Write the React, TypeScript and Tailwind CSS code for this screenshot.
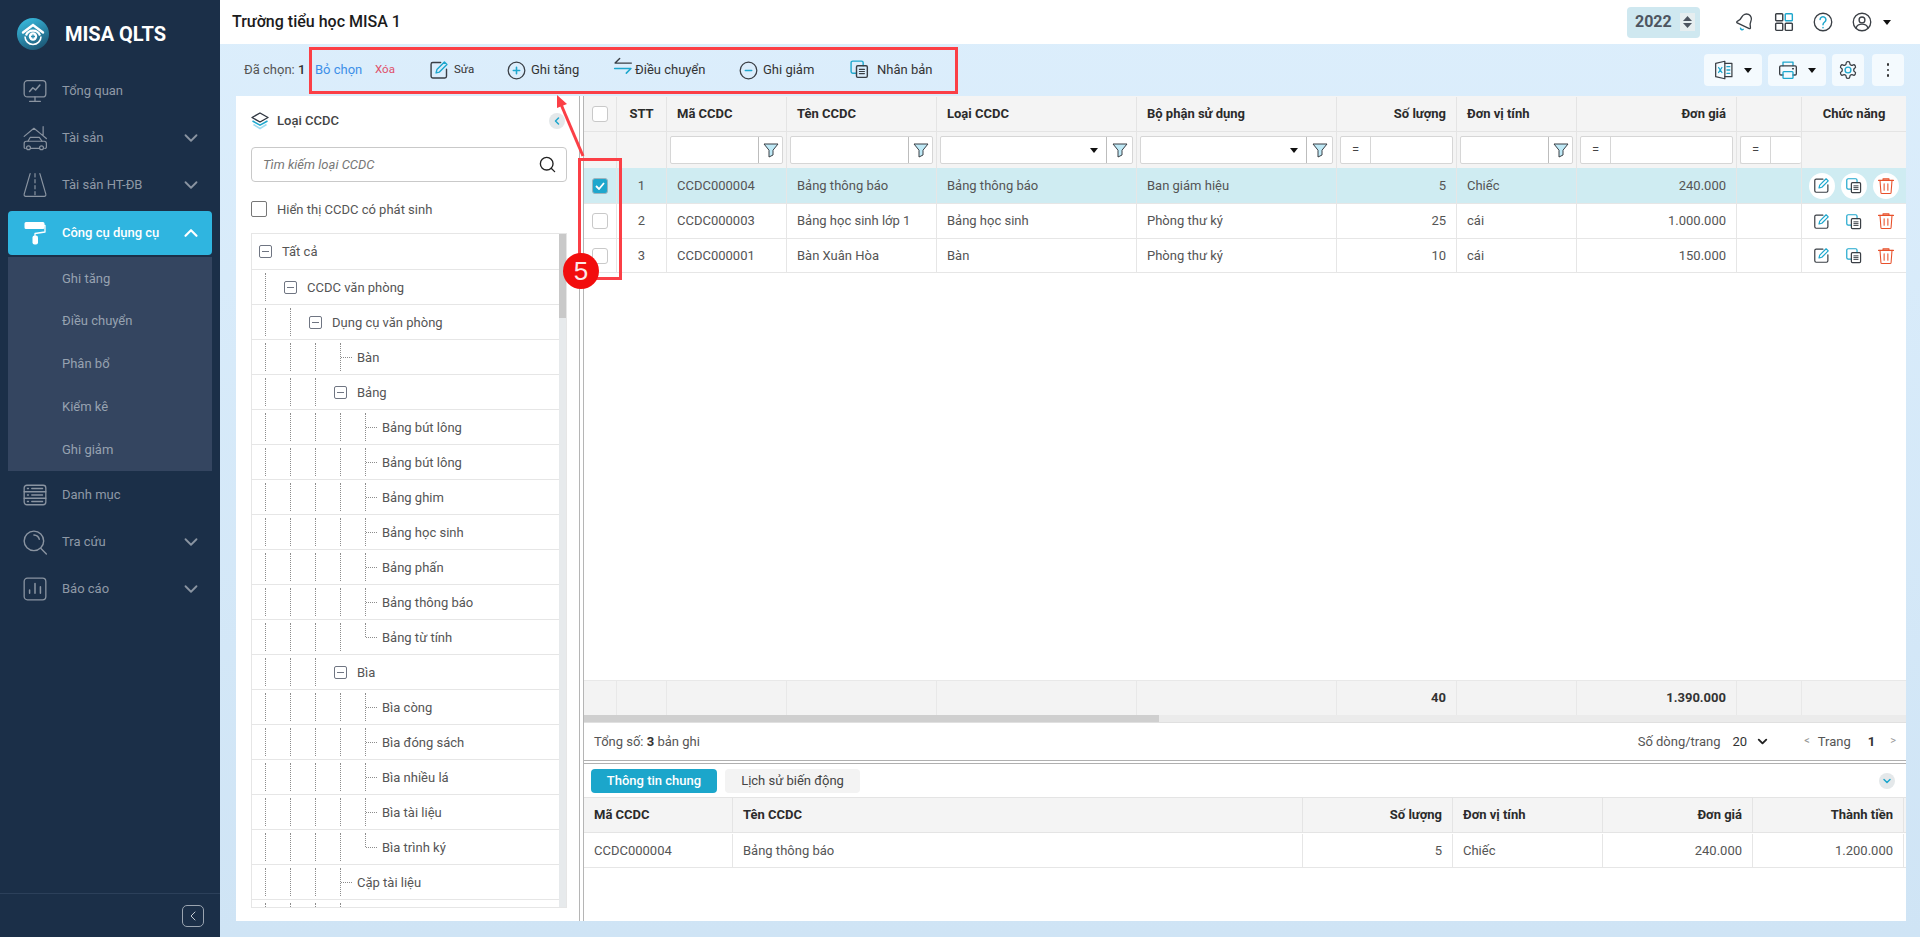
// Màn hình Công cụ dụng cụ — MISA QLTS
import { ChevronDown, ChevronLeft, ChevronUp, Search } from "lucide-react";
import type { ReactNode } from "react";

const COLS =
  "grid grid-cols-[33px_50px_120px_150px_200px_200px_120px_120px_160px_65px_104px]";
const DETAIL_COLS = "grid grid-cols-[149px_570px_150px_150px_150px_153px]";

function Svg({ size = 24, children, className }: { size?: number; children: ReactNode; className?: string }) {
  return (
    <svg
      width={size}
      height={size}
      viewBox="0 0 24 24"
      fill="none"
      strokeLinecap="round"
      strokeLinejoin="round"
      className={className}
    >
      {children}
    </svg>
  );
}

/* ---------- icon menu ---------- */
const MENU_STROKE = "#8a94a1";

function IconOverview() {
  return (
    <Svg size={26}>
      <g stroke={MENU_STROKE} strokeWidth="1.2">
        <rect x="2" y="2.5" width="20" height="15" rx="3" />
        <path d="M12 17.5v4M7 21.5h10" />
        <path d="M7 12.5l3-3.5 2.5 2L16.5 6.5" strokeWidth="1.4" />
      </g>
    </Svg>
  );
}
function IconAsset() {
  return (
    <Svg size={26}>
      <g stroke={MENU_STROKE} strokeWidth="1.1">
        <path d="M2 10.5L11 3l5.5 4.5M19.5 1.5v8.5M16.5 7.5l6 5" />
        <path d="M5.5 15l2-3.5h8.5l2.5 3.5" />
        <path d="M3 21.5h-.5a1 1 0 0 1-.5-1v-3.5a2 2 0 0 1 2-2h16.5a2 2 0 0 1 2 2v3.5a1 1 0 0 1-.7 1H21" />
        <circle cx="6" cy="21" r="1.8" />
        <circle cx="18" cy="21" r="1.8" />
        <path d="M8 21.5h8" />
      </g>
    </Svg>
  );
}
function IconRoad() {
  return (
    <Svg size={26}>
      <g stroke={MENU_STROKE} strokeWidth="1.1">
        <path d="M7.5 1.5L2 20.5a1.5 1.5 0 0 0 1.5 2h17a1.5 1.5 0 0 0 1.5-2L16.5 1.5" />
        <path d="M12 1.5v3M12 7v3M12 12.5v3M12 18v3" />
      </g>
    </Svg>
  );
}
function IconRoller() {
  return (
    <Svg>
      <path
        d="M3 1h17a1.5 1.5 0 0 1 1.5 1.5v4A1.5 1.5 0 0 1 20 8H3a1.5 1.5 0 0 1-1.5-1.5v-4A1.5 1.5 0 0 1 3 1z"
        fill="#fff"
      />
      <path d="M21 4.5h1v6.5l-10 1.5v2" stroke="#fff" strokeWidth="1.3" />
      <rect x="9.5" y="14.5" width="5.5" height="9" rx="2" fill="#fff" />
    </Svg>
  );
}
function IconCatalog() {
  return (
    <Svg size={26}>
      <g stroke={MENU_STROKE} strokeWidth="1.2">
        <rect x="2" y="3" width="20" height="18" rx="2.5" />
        <path d="M2 9h20M2 15h20" />
        <path d="M5 6h1M9 6h10M5 12h1M9 12h10M5 18h1M9 18h10" />
      </g>
    </Svg>
  );
}
function IconLookup() {
  return (
    <Svg size={26}>
      <g stroke={MENU_STROKE} strokeWidth="1.3">
        <circle cx="11" cy="11" r="9" />
        <path d="M11 5.5a5.5 5.5 0 0 1 5 4" />
        <path d="M17.5 18l5 5" />
      </g>
    </Svg>
  );
}
function IconReport() {
  return (
    <Svg size={26}>
      <g stroke={MENU_STROKE} strokeWidth="1.2">
        <rect x="2" y="2" width="20" height="20" rx="3" />
        <path d="M7 16v-3M12 16V7M17 16v-6" strokeWidth="1.4" />
      </g>
    </Svg>
  );
}
function Logo() {
  return (
    <svg width="32" height="32" viewBox="0 0 32 32">
      <defs>
        <linearGradient id="logo" x1="0.2" y1="0" x2="0.7" y2="1">
          <stop offset="0" stopColor="#38bce0" />
          <stop offset="1" stopColor="#1c5674" />
        </linearGradient>
      </defs>
      <circle cx="16" cy="16" r="16" fill="url(#logo)" />
      <path d="M6 14.5L16 7l10 7.5" stroke="#fff" strokeWidth="2.4" fill="none" strokeLinecap="round" />
      <path d="M9 17.5a7.5 7.5 0 0 1 14 0" stroke="#fff" strokeWidth="2.2" fill="none" />
      <path d="M8 18.5a8 8 0 0 0 16 0" stroke="#fff" strokeWidth="1.6" fill="none" />
      <circle cx="16" cy="18.5" r="4.2" fill="#fff" />
      <path d="M14 18.5h4M16 16.5v4" stroke="#2a8db0" strokeWidth="1.3" />
    </svg>
  );
}

/* ---------- icon thanh công cụ ---------- */
const DARK = "#3a3f45";
const BLUE = "#1ea7cd";

function EditIcon({ size = 20 }: { size?: number }) {
  return (
    <Svg size={size}>
      <path d="M14 3H4.5A2 2 0 0 0 2.5 5v14.5a2 2 0 0 0 2 2H19a2 2 0 0 0 2-2V11" stroke={DARK} strokeWidth="1.7" />
      <path d="M8.5 15.5l1-4L18.5 2.5l3 3-9 9z" stroke={BLUE} strokeWidth="1.7" />
    </Svg>
  );
}
function CopyIcon({ size = 20, className }: { size?: number; className?: string }) {
  return (
    <Svg size={size} className={className}>
      <path d="M9 17H4.5a2 2 0 0 1-2-2V4.5a2 2 0 0 1 2-2H15a2 2 0 0 1 2 2V8" stroke={BLUE} strokeWidth="1.7" />
      <rect x="9" y="8" width="13" height="14" rx="1.5" stroke={DARK} strokeWidth="1.7" />
      <path d="M12.5 12.5h6M12.5 15h6M12.5 17.5h6" stroke={DARK} strokeWidth="1.4" />
    </Svg>
  );
}
function TrashIcon() {
  return (
    <Svg size={18}>
      <path d="M2 4.5h20M8 4.5V2.5h8v2" stroke="#e8502a" strokeWidth="1.4" />
      <path d="M4 4.5l1.2 16a1.5 1.5 0 0 0 1.5 1.5h10.6a1.5 1.5 0 0 0 1.5-1.5L20 4.5" stroke="#e8502a" strokeWidth="1.4" />
      <path d="M9.5 9v8.5M14.5 9v8.5" stroke="#e8502a" strokeWidth="1.4" />
    </Svg>
  );
}
function CircleSign({ minus }: { minus?: boolean }) {
  return (
    <Svg size={19}>
      <circle cx="12" cy="12" r="10.5" stroke={DARK} strokeWidth="1.6" />
      <path d={minus ? "M8 12h8" : "M8 12h8M12 8v8"} stroke={BLUE} strokeWidth="2" />
    </Svg>
  );
}
function TransferIcon() {
  return (
    <Svg size={20} className="-mt-[8px]">
      <path d="M22 8.5H2.5L8 3" stroke={DARK} strokeWidth="1.7" />
      <path d="M2 15h19.5L16 20.5" stroke={BLUE} strokeWidth="1.9" />
    </Svg>
  );
}
function FilterIcon() {
  return (
    <svg width="16" height="16" viewBox="0 0 16 16">
      <path
        d="M1 2h14L10 8.2V13l-4 2V8.2z"
        fill="#bfe9f6"
        stroke="#3a3f45"
        strokeWidth="1"
        strokeLinejoin="round"
      />
    </svg>
  );
}
function Caret({ className = "" }: { className?: string }) {
  return (
    <svg width="8" height="5" viewBox="0 0 8 5" className={className}>
      <path d="M0 0h8L4 5z" fill="#111" />
    </svg>
  );
}

/* ---------- sidebar ---------- */
function MenuItem({ icon, label, arrow }: { icon: ReactNode; label: string; arrow?: boolean }) {
  return (
    <div className="flex h-[47px] shrink-0 items-center pl-[22px] pr-[18px] text-[13px] text-[#8f99a6]">
      <span className="flex w-[40px] shrink-0">{icon}</span>
      <span className="flex-1">{label}</span>
      {arrow && <ChevronDown size={22} strokeWidth={2} color={MENU_STROKE} />}
    </div>
  );
}

function Sidebar() {
  return (
    <aside className="flex h-full w-[220px] shrink-0 flex-col bg-[#1b2f48]">
      <div className="flex h-[67px] shrink-0 items-center gap-[16px] pl-[17px]">
        <Logo />
        <span className="text-[20px] font-bold text-white">MISA QLTS</span>
      </div>
      <MenuItem icon={<IconOverview />} label="Tổng quan" />
      <MenuItem icon={<IconAsset />} label="Tài sản" arrow />
      <MenuItem icon={<IconRoad />} label="Tài sản HT-ĐB" arrow />
      <div className="mx-[8px] mt-[3px] flex h-[44px] shrink-0 items-center rounded-[4px] bg-[#2fb5e0] pl-[15px] pr-[10px] text-[13px] font-medium text-white">
        <span className="flex w-[39px] shrink-0">
          <IconRoller />
        </span>
        <span className="flex-1">Công cụ dụng cụ</span>
        <ChevronUp size={22} strokeWidth={2.4} color="#fff" />
      </div>
      <div className="mx-[8px] mt-[2px] flex h-[214px] shrink-0 flex-col bg-[#344560] pl-[54px] text-[13px] text-[#97a2b0]">
        {["Ghi tăng", "Điều chuyển", "Phân bổ", "Kiểm kê", "Ghi giảm"].map((t) => (
          <div key={t} className="flex h-[43px] items-center">
            {t}
          </div>
        ))}
      </div>
      <MenuItem icon={<IconCatalog />} label="Danh mục" />
      <MenuItem icon={<IconLookup />} label="Tra cứu" arrow />
      <MenuItem icon={<IconReport />} label="Báo cáo" arrow />
      <div className="mt-auto flex h-[44px] shrink-0 items-center justify-end border-t border-[#2c405a] pr-[16px]">
        <span className="flex h-[22px] w-[22px] items-center justify-center rounded-[5px] border border-[#9aa4b0]">
          <ChevronLeft size={16} strokeWidth={1.5} color="#c3cad2" />
        </span>
      </div>
    </aside>
  );
}

/* ---------- thanh trên ---------- */
function TopBar() {
  return (
    <header className="flex h-[44px] shrink-0 items-center bg-white pl-[12px]">
      <span className="text-[16px] font-medium text-[#1b1b1b]">Trường tiểu học MISA 1</span>
      <div className="ml-auto flex h-[31px] w-[73px] items-center rounded-[4px] bg-[#cfe8f0] pl-[8px] text-[16px] font-bold text-[#4d5560]">
        2022
        <span className="ml-[8px] flex h-[18px] w-[15px] flex-col items-center justify-center gap-[2px] bg-[#e6eef0]">
          <svg width="9" height="5" viewBox="0 0 9 5">
            <path d="M0 5h9L4.5 0z" fill="#4d5560" />
          </svg>
          <svg width="9" height="5" viewBox="0 0 9 5">
            <path d="M0 0h9L4.5 5z" fill="#4d5560" />
          </svg>
        </span>
      </div>
      <div className="ml-[35px] mr-[29px] flex items-center gap-[19px]">
        <Svg size={20}>
          <g transform="rotate(25 12 12)">
            <path
              d="M3.262 15.326A1 1 0 0 0 4 17h16a1 1 0 0 0 .74-1.673C19.41 13.956 18 12.499 18 8A6 6 0 0 0 6 8c0 4.499-1.411 5.956-2.738 7.326"
              stroke={DARK}
              strokeWidth="1.6"
            />
            <path d="M10.268 21a2 2 0 0 0 3.464 0" stroke={BLUE} strokeWidth="1.8" />
          </g>
        </Svg>
        <Svg size={20}>
          <g strokeWidth="1.7">
            <rect x="2" y="2" width="8.5" height="8.5" rx="1" stroke={DARK} />
            <rect x="13.5" y="2" width="8.5" height="8.5" rx="1" stroke={BLUE} />
            <rect x="2" y="13.5" width="8.5" height="8.5" rx="1" stroke={DARK} />
            <rect x="13.5" y="13.5" width="8.5" height="8.5" rx="1" stroke={DARK} />
          </g>
        </Svg>
        <Svg size={20}>
          <circle cx="12" cy="12" r="10.5" stroke={DARK} strokeWidth="1.6" />
          <path d="M8.5 9a3.5 3.5 0 1 1 5.5 3c-1.5 1-2 1.8-2 3.2M12 18.5v.3" stroke={BLUE} strokeWidth="1.8" />
        </Svg>
        <span className="flex items-center gap-[11px]">
          <Svg size={20}>
            <circle cx="12" cy="12" r="10.5" stroke={DARK} strokeWidth="1.6" />
            <circle cx="12" cy="9.5" r="3.5" stroke={DARK} strokeWidth="1.6" />
            <path d="M5 19c1-3 4-4.5 7-4.5s6 1.5 7 4.5" stroke={DARK} strokeWidth="1.6" />
          </Svg>
          <Caret />
        </span>
      </div>
    </header>
  );
}

function Action({ icon, label, className = "" }: { icon: ReactNode; label: string; className?: string }) {
  return (
    <span className={`flex items-center text-[#333] ${className}`}>
      {icon}
      {label}
    </span>
  );
}

function ToolButton({ children, className = "" }: { children: ReactNode; className?: string }) {
  return (
    <span className={`flex h-[32px] items-center justify-center rounded-[4px] bg-[#f4fafe] ${className}`}>
      {children}
    </span>
  );
}

function Toolbar() {
  return (
    <div className="flex h-[52px] shrink-0 items-center pl-[24px] pr-[16px] text-[13px]">
      <span className="w-[71px] text-[#555]">
        Đã chọn: <b className="font-medium text-[#333]">1</b>
      </span>
      <span className="w-[60px] text-[#3d8fe8]">Bỏ chọn</span>
      <span className="w-[54px] text-[11.5px] text-[#e0506a]">Xóa</span>
      <Action className="w-[78px] gap-[5px] text-[11.5px]" icon={<EditIcon />} label="Sửa" />
      <Action className="w-[106px] gap-[5px]" icon={<CircleSign />} label="Ghi tăng" />
      <Action className="w-[126px] gap-[2px]" icon={<TransferIcon />} label="Điều chuyển" />
      <Action className="w-[110px] gap-[5px]" icon={<CircleSign minus />} label="Ghi giảm" />
      <Action className="gap-[8px]" icon={<CopyIcon className="-mt-[3px]" />} label="Nhân bản" />
      <div className="ml-auto flex items-center gap-[6px]">
        <ToolButton className="w-[58px] gap-[10px]">
          <Svg size={20}>
            <path d="M13 1.5L2 4v16l11 2.5z" stroke={DARK} strokeWidth="1.5" />
            <path d="M13 4h8.5v16H13" stroke={DARK} strokeWidth="1.5" />
            <path d="M5.5 9l4 6M9.5 9l-4 6" stroke={BLUE} strokeWidth="1.6" />
            <path d="M15.5 8h3.5M15.5 12h3.5M15.5 16h3.5" stroke={BLUE} strokeWidth="1.6" />
          </Svg>
          <Caret />
        </ToolButton>
        <ToolButton className="w-[58px] gap-[10px]">
          <Svg size={20}>
            <path d="M6 7V2.5h12V7" stroke={BLUE} strokeWidth="1.6" />
            <path d="M6 18H3.5A1.5 1.5 0 0 1 2 16.5v-8A1.5 1.5 0 0 1 3.5 7h17A1.5 1.5 0 0 1 22 8.5v8a1.5 1.5 0 0 1-1.5 1.5H18" stroke={DARK} strokeWidth="1.6" />
            <rect x="6" y="14" width="12" height="8" rx="1" stroke={BLUE} strokeWidth="1.6" />
            <path d="M17.5 10.5h1" stroke={DARK} strokeWidth="1.6" />
          </Svg>
          <Caret />
        </ToolButton>
        <ToolButton className="w-[32px]">
          <Svg size={20}>
            <path
              d="M12.22 2h-.44a2 2 0 0 0-2 2v.18a2 2 0 0 1-1 1.73l-.43.25a2 2 0 0 1-2 0l-.15-.08a2 2 0 0 0-2.73.73l-.22.38a2 2 0 0 0 .73 2.73l.15.1a2 2 0 0 1 1 1.72v.51a2 2 0 0 1-1 1.74l-.15.09a2 2 0 0 0-.73 2.73l.22.38a2 2 0 0 0 2.73.73l.15-.08a2 2 0 0 1 2 0l.43.25a2 2 0 0 1 1 1.73V20a2 2 0 0 0 2 2h.44a2 2 0 0 0 2-2v-.18a2 2 0 0 1 1-1.73l.43-.25a2 2 0 0 1 2 0l.15.08a2 2 0 0 0 2.73-.73l.22-.39a2 2 0 0 0-.73-2.73l-.15-.08a2 2 0 0 1-1-1.74v-.5a2 2 0 0 1 1-1.74l.15-.09a2 2 0 0 0 .73-2.73l-.22-.38a2 2 0 0 0-2.73-.73l-.15.08a2 2 0 0 1-2 0l-.43-.25a2 2 0 0 1-1-1.73V4a2 2 0 0 0-2-2z"
              stroke={DARK}
              strokeWidth="1.5"
            />
            <circle cx="12" cy="12" r="3.5" stroke={BLUE} strokeWidth="1.6" />
          </Svg>
        </ToolButton>
        <ToolButton className="ml-[2px] w-[32px] flex-col gap-[3px]">
          <span className="h-[2.5px] w-[2.5px] rounded-full bg-[#333]" />
          <span className="h-[2.5px] w-[2.5px] rounded-full bg-[#333]" />
          <span className="h-[2.5px] w-[2.5px] rounded-full bg-[#333]" />
        </ToolButton>
      </div>
    </div>
  );
}

/* ---------- cây loại CCDC ---------- */
type TreeNode = { label: string; level: number; folder?: boolean; last?: boolean };

const TREE: TreeNode[] = [
  { label: "Tất cả", level: 0, folder: true },
  { label: "CCDC văn phòng", level: 1, folder: true },
  { label: "Dụng cụ văn phòng", level: 2, folder: true },
  { label: "Bàn", level: 3 },
  { label: "Bảng", level: 3, folder: true },
  { label: "Bảng bút lông", level: 4 },
  { label: "Bảng bút lông", level: 4 },
  { label: "Bảng ghim", level: 4 },
  { label: "Bảng học sinh", level: 4 },
  { label: "Bảng phấn", level: 4 },
  { label: "Bảng thông báo", level: 4 },
  { label: "Bảng từ tính", level: 4, last: true },
  { label: "Bìa", level: 3, folder: true },
  { label: "Bìa còng", level: 4 },
  { label: "Bìa đóng sách", level: 4 },
  { label: "Bìa nhiều lá", level: 4 },
  { label: "Bìa tài liệu", level: 4 },
  { label: "Bìa trình ký", level: 4, last: true },
  { label: "Cặp tài liệu", level: 3 },
  { label: "", level: 3 },
];

function TreeRow({ node, first }: { node: TreeNode; first: boolean }) {
  const guides = Array.from({ length: node.level });
  return (
    <div className={`flex shrink-0 items-stretch border-b border-[#e6e6e6] pl-[7px] text-[13px] text-[#555] ${first ? "h-[36px]" : "h-[35px]"}`}>
      {guides.map((_, i) => (
        <span key={i} className="w-[25px] shrink-0 py-[3px]">
          <span className="ml-[6px] block h-full border-l border-dotted border-[#8c8c8c]" />
        </span>
      ))}
      {node.folder ? (
        <span className="flex w-[23px] shrink-0 items-center">
          <span className="flex h-[13px] w-[13px] items-center justify-center rounded-[2px] border border-[#6f7582]">
            <span className="h-px w-[7px] bg-[#6f7582]" />
          </span>
        </span>
      ) : (
        <span className="flex w-[23px] shrink-0 py-[3px] pl-[6px]">
          <span className={`block border-l border-dotted border-[#8c8c8c] ${node.last ? "h-1/2" : "h-full"}`} />
          <span className="block w-[11px] self-center border-t border-dotted border-[#8c8c8c]" />
        </span>
      )}
      <span className="flex items-center pt-[1px]">{node.label}</span>
    </div>
  );
}

function TreePanel() {
  return (
    <section className="flex w-[343px] shrink-0 flex-col bg-white pl-[15px] pr-[12px]">
      <div className="flex h-[50px] shrink-0 items-center">
        <svg width="18" height="18" viewBox="0 0 18 18" className="mr-[8px]">
          <path d="M9 1l8 4.5L9 10 1 5.5z" fill="#fff" stroke="#2f3640" strokeWidth="1.4" strokeLinejoin="round" />
          <path d="M1.5 9L9 13.2 16.5 9" fill="none" stroke="#1ea7cd" strokeWidth="1.5" />
          <path d="M2.5 12.5L9 16.5l6.5-4" fill="none" stroke="#9edcf0" strokeWidth="1.5" />
        </svg>
        <span className="text-[13px] font-medium text-[#444]">Loại CCDC</span>
        <span className="ml-auto mr-[2px] flex h-[16px] w-[16px] items-center justify-center rounded-full bg-[#e4e8ea]">
          <ChevronLeft size={12} strokeWidth={3} color="#1ea7cd" />
        </span>
      </div>
      <div className="mt-[1px] flex h-[35px] shrink-0 items-center rounded-[4px] border border-[#c9c9c9] pl-[11px] pr-[9px]">
        <span className="flex-1 text-[13px] italic text-[#777]">Tìm kiếm loại CCDC</span>
        <Search size={19} color="#222" strokeWidth={1.7} />
      </div>
      <label className="mt-[19px] flex h-[16px] shrink-0 items-center gap-[10px] text-[13px] text-[#555]">
        <span className="h-[16px] w-[16px] shrink-0 rounded-[2px] border border-[#777] bg-white" />
        <span className="pt-[1px]">Hiển thị CCDC có phát sinh</span>
      </label>
      <div className="mt-[16px] flex min-h-0 flex-1 border border-b-0 border-[#e6e6e6]">
        <div className="min-w-0 flex-1 overflow-hidden">
          {TREE.map((n, i) => (
            <TreeRow key={i} node={n} first={i === 0} />
          ))}
        </div>
        <div className="w-[7px] shrink-0 bg-[#e7eaec]">
          <div className="h-[84px] bg-[#c9c9c9]" />
        </div>
      </div>
      <div className="h-[14px] shrink-0 border-t border-[#e6e6e6]" />
    </section>
  );
}

/* ---------- bảng ---------- */
function HeadCell({ children, align = "left", className = "" }: { children?: ReactNode; align?: "left" | "right" | "center"; className?: string }) {
  const pos = align === "center" ? "justify-center" : align === "right" ? "justify-end px-[10px]" : "px-[10px]";
  return (
    <div className={`flex items-center border-r border-[#e4e4e4] text-[13px] font-bold text-[#2b2b2b] ${pos} ${className}`}>
      {children}
    </div>
  );
}

function Checkbox({ checked }: { checked?: boolean }) {
  return checked ? (
    <span className="flex h-[16px] w-[16px] shrink-0 items-center justify-center rounded-[3px] border border-[#9db4bd] bg-[#1ea7cd]">
      <svg width="10" height="8" viewBox="0 0 10 8">
        <path d="M1 4l3 3 5-6" fill="none" stroke="#fff" strokeWidth="1.8" />
      </svg>
    </span>
  ) : (
    <span className="h-[16px] w-[16px] shrink-0 rounded-[3px] border border-[#c9c9c9] bg-white" />
  );
}

function FilterText({ width = "w-[24px]" }: { width?: string }) {
  return (
    <div className="flex items-center border-r border-[#e4e4e4] px-[3px]">
      <div className="flex h-[28px] flex-1 justify-end rounded-[2px] border border-[#d6d6d6] bg-white">
        <span className={`flex items-center justify-center border-l border-[#bdbdbd] ${width}`}>
          <FilterIcon />
        </span>
      </div>
    </div>
  );
}
function FilterSelect() {
  return (
    <div className="flex items-center border-r border-[#e4e4e4] px-[3px]">
      <div className="flex h-[28px] flex-1 items-center justify-end rounded-[2px] border border-[#d6d6d6] bg-white">
        <Caret className="mr-[8px]" />
        <span className="flex h-full w-[26px] items-center justify-center border-l border-[#bdbdbd]">
          <FilterIcon />
        </span>
      </div>
    </div>
  );
}
function FilterNumber({ clipped }: { clipped?: boolean }) {
  return (
    <div className={`flex items-center border-r border-[#e4e4e4] ${clipped ? "pl-[3px]" : "px-[3px]"}`}>
      <div className={`flex h-[28px] flex-1 rounded-[2px] border border-[#d6d6d6] bg-white ${clipped ? "border-r-0" : ""}`}>
        <span className="flex w-[30px] items-center justify-center border-r border-[#d6d6d6] text-[13px] text-[#444]">=</span>
      </div>
    </div>
  );
}

const ROWS = [
  { stt: 1, ma: "CCDC000004", ten: "Bảng thông báo", loai: "Bảng thông báo", bp: "Ban giám hiệu", sl: 5, dvt: "Chiếc", gia: "240.000", h: "h-[36px]" },
  { stt: 2, ma: "CCDC000003", ten: "Bảng học sinh lớp 1", loai: "Bảng học sinh", bp: "Phòng thư ký", sl: 25, dvt: "cái", gia: "1.000.000", h: "h-[35px]" },
  { stt: 3, ma: "CCDC000001", ten: "Bàn Xuân Hòa", loai: "Bàn", bp: "Phòng thư ký", sl: 10, dvt: "cái", gia: "150.000", h: "h-[34px]" },
];

function Td({ children, align = "left", className = "" }: { children?: ReactNode; align?: "left" | "right" | "center"; className?: string }) {
  const pos = align === "center" ? "justify-center" : align === "right" ? "justify-end px-[10px]" : "px-[10px]";
  return <div className={`flex items-center border-r ${pos} ${className || "border-[#e6e6e6]"}`}>{children}</div>;
}

function RowAction({ selected, children }: { selected: boolean; children: ReactNode }) {
  return (
    <span className={`flex h-[26px] w-[26px] items-center justify-center rounded-full ${selected ? "bg-white" : ""}`}>
      {children}
    </span>
  );
}

function MainTable() {
  return (
    <div className="flex min-h-0 flex-1 flex-col bg-white">
      <div className={`${COLS} h-[36px] shrink-0 border-b border-[#e4e4e4] bg-[#f4f4f4] pt-[1px]`}>
        <Td align="center" className="border-[#e4e4e4]">
          <Checkbox />
        </Td>
        <HeadCell align="center">STT</HeadCell>
        <HeadCell>Mã CCDC</HeadCell>
        <HeadCell>Tên CCDC</HeadCell>
        <HeadCell>Loại CCDC</HeadCell>
        <HeadCell>Bộ phận sử dụng</HeadCell>
        <HeadCell align="right">Số lượng</HeadCell>
        <HeadCell>Đơn vị tính</HeadCell>
        <HeadCell align="right">Đơn giá</HeadCell>
        <HeadCell />
        <HeadCell align="center" className="border-r-0">
          Chức năng
        </HeadCell>
      </div>
      <div className={`${COLS} h-[36px] shrink-0 bg-[#f4f4f4]`}>
        <Td className="border-[#e4e4e4]" />
        <Td className="border-[#e4e4e4]" />
        <FilterText />
        <FilterText />
        <FilterSelect />
        <FilterSelect />
        <FilterNumber />
        <FilterText />
        <FilterNumber />
        <FilterNumber clipped />
        <div />
      </div>
      {ROWS.map((r, i) => {
        const selected = i === 0;
        return (
          <div
            key={r.stt}
            className={`${COLS} ${r.h} shrink-0 border-b border-[#e6e6e6] text-[13px] text-[#555] ${selected ? "bg-[#cfecf2]" : "bg-white"}`}
          >
            <Td align="center">
              <Checkbox checked={selected} />
            </Td>
            <Td align="center">{r.stt}</Td>
            <Td>{r.ma}</Td>
            <Td>{r.ten}</Td>
            <Td>{r.loai}</Td>
            <Td>{r.bp}</Td>
            <Td align="right">{r.sl}</Td>
            <Td>{r.dvt}</Td>
            <Td align="right">{r.gia}</Td>
            <Td />
            <div className="flex items-center justify-center gap-[6px] pr-[1px]">
              <RowAction selected={selected}>
                <EditIcon size={17} />
              </RowAction>
              <RowAction selected={selected}>
                <CopyIcon size={17} />
              </RowAction>
              <RowAction selected={selected}>
                <TrashIcon />
              </RowAction>
            </div>
          </div>
        );
      })}
      <div className="flex-1" />
      <div className={`${COLS} h-[35px] shrink-0 border-t border-[#e8e8e8] bg-[#f3f3f3] text-[13px] font-bold text-[#333]`}>
        <Td className="border-[#e8e8e8]" />
        <Td className="border-[#e8e8e8]" />
        <Td className="border-[#e8e8e8]" />
        <Td className="border-[#e8e8e8]" />
        <Td className="border-[#e8e8e8]" />
        <Td className="border-[#e8e8e8]" />
        <Td align="right" className="border-[#e8e8e8]">
          40
        </Td>
        <Td className="border-[#e8e8e8]" />
        <Td align="right" className="border-[#e8e8e8]">
          1.390.000
        </Td>
        <Td className="border-[#e8e8e8]" />
        <div />
      </div>
      <div className="h-[8px] shrink-0 border-b border-[#e0e0e0] bg-[#ebebeb]">
        <div className="h-[7px] w-[575px] bg-[#cfcfcf]" />
      </div>
      <div className="flex h-[37px] shrink-0 items-center bg-white pl-[10px] pr-[10px] text-[13px] text-[#555]">
        <span>
          Tổng số: <b className="font-bold text-[#333]">3</b> bản ghi
        </span>
        <span className="ml-auto">Số dòng/trang</span>
        <span className="ml-[12px] text-[#333]">20</span>
        <ChevronDown size={15} strokeWidth={3} color="#222" className="ml-[8px]" />
        <span className="ml-[34px] text-[11px] text-[#999]">&lt;</span>
        <span className="ml-[8px]">Trang</span>
        <span className="ml-[17px] font-bold text-[#333]">1</span>
        <span className="ml-[15px] text-[11px] text-[#999]">&gt;</span>
      </div>
    </div>
  );
}

function DetailPanel() {
  return (
    <div className="flex h-[157px] shrink-0 flex-col bg-white">
      <div className="flex h-[33px] shrink-0 items-center gap-[8px] pl-[7px] pr-[11px] text-[13px]">
        <span className="flex h-[24px] w-[126px] items-center justify-center rounded-[4px] bg-[#1ba6cb] font-medium text-white">
          Thông tin chung
        </span>
        <span className="flex h-[24px] w-[135px] items-center justify-center rounded-[4px] bg-[#f3f3f3] text-[#444]">
          Lịch sử biến động
        </span>
        <span className="ml-auto flex h-[16px] w-[16px] items-center justify-center rounded-full bg-[#e4e8ea]">
          <ChevronDown size={12} strokeWidth={3} color="#1ea7cd" />
        </span>
      </div>
      <div className={`${DETAIL_COLS} h-[36px] shrink-0 border-y border-[#e4e4e4] bg-[#f4f4f4]`}>
        <HeadCell>Mã CCDC</HeadCell>
        <HeadCell>Tên CCDC</HeadCell>
        <HeadCell align="right">Số lượng</HeadCell>
        <HeadCell>Đơn vị tính</HeadCell>
        <HeadCell align="right">Đơn giá</HeadCell>
        <HeadCell align="right" className="mr-[2px]">
          Thành tiền
        </HeadCell>
      </div>
      <div className={`${DETAIL_COLS} h-[35px] shrink-0 border-b border-[#e6e6e6] pt-[1px] text-[13px] text-[#555]`}>
        <Td>CCDC000004</Td>
        <Td>Bảng thông báo</Td>
        <Td align="right">5</Td>
        <Td>Chiếc</Td>
        <Td align="right">240.000</Td>
        <Td align="right" className="mr-[2px] border-[#e6e6e6]">
          1.200.000
        </Td>
      </div>
    </div>
  );
}

/* ---------- chú thích đỏ trên ảnh ---------- */
function Annotations() {
  return (
    <>
      <div className="absolute left-[309px] top-[47px] h-[47px] w-[649px] border-[3px] border-[#fb3f46]" />
      <div className="absolute left-[578px] top-[158px] h-[122px] w-[44px] border-[3px] border-[#fb3f46]" />
      <svg className="absolute left-[550px] top-[90px]" width="40" height="70" viewBox="0 0 40 70">
        <path d="M33 66L10 12" stroke="#fb3f46" strokeWidth="3" />
        <path d="M7 5l10 9-10 4z" fill="#fb3f46" />
      </svg>
      <div className="absolute left-[563px] top-[253px] flex h-[36px] w-[36px] items-center justify-center rounded-full bg-[#f20d0d] font-['Liberation_Sans',sans-serif] text-[26px] text-[#fde8e8]">
        5
      </div>
    </>
  );
}

export default function App() {
  return (
    <div className="relative flex h-[937px] w-[1920px] overflow-hidden font-['Roboto',sans-serif]">
      <Sidebar />
      <main className="flex min-w-0 flex-1 flex-col bg-linear-to-b from-[#dceefc] to-[#cfe4f5]">
        <TopBar />
        <Toolbar />
        <div className="flex min-h-0 flex-1 pb-[16px] pl-[16px] pr-[14px]">
          <TreePanel />
          <div className="w-[5px] shrink-0 border-x border-[#b5b5b5] bg-white" />
          <div className="flex min-w-0 flex-1 flex-col">
            <MainTable />
            <div className="h-[4px] shrink-0 border-y border-[#b0b0b0] bg-white" />
            <DetailPanel />
          </div>
        </div>
      </main>
      <Annotations />
    </div>
  );
}
